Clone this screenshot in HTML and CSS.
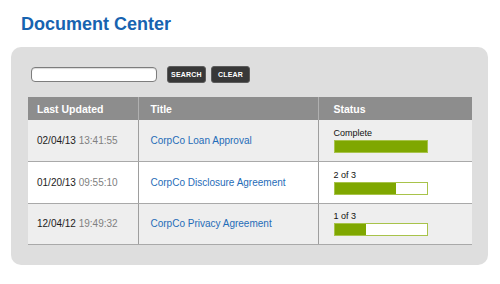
FILE: index.html
```html
<!DOCTYPE html>
<html lang="en">
<head>
  <meta charset="UTF-8" />
  <meta name="viewport" content="width=device-width, initial-scale=1.0"/>
  <title>Document Center</title>
  <link rel="stylesheet" href="styles.css">
</head>
<body>
  <div class="page">
    <h1>Document Center</h1>

    <div class="panel">
      <div class="toolbar">
        <input type="text" class="search-box">
        <button class="btn">Search</button>
        <button class="btn">Clear</button>
      </div>

      <table class="docs">
        <thead>
          <tr>
            <th class="col-date">Last Updated</th>
            <th class="col-title">Title</th>
            <th class="col-status">Status</th>
          </tr>
        </thead>
        <tbody>
          <tr class="odd">
            <td><span class="date">02/04/13</span> <span class="time">13:41:55</span></td>
            <td><a href="#">CorpCo Loan Approval</a></td>
            <td>
              <div class="status-label">Complete</div>
              <div class="bar"><div class="fill" style="width: 100%;"></div></div>
            </td>
          </tr>
          <tr>
            <td><span class="date">01/20/13</span> <span class="time">09:55:10</span></td>
            <td><a href="#">CorpCo Disclosure Agreement</a></td>
            <td>
              <div class="status-label">2 of 3</div>
              <div class="bar"><div class="fill" style="width: 67%;"></div></div>
            </td>
          </tr>
          <tr class="odd">
            <td><span class="date">12/04/12</span> <span class="time">19:49:32</span></td>
            <td><a href="#">CorpCo Privacy Agreement</a></td>
            <td>
              <div class="status-label">1 of 3</div>
              <div class="bar"><div class="fill" style="width: 34%;"></div></div>
            </td>
          </tr>
        </tbody>
      </table>
    </div>
  </div>
</body>
</html>
```

FILE: styles.css
```css
body {
  font-family: "Liberation Sans", Arial, sans-serif;
  background-color: white;
  margin: 0;
  padding: 0;
}
.page {
  padding: 0 12px 0 11px;
}
h1 {
  margin: 0 0 12px 0;
  padding: 14px 0 0 10px;
  font-size: 18px;
  line-height: 21px;
  color: #1763b0;
}
.panel {
  background-color: #dedede;
  border-radius: 10px;
  padding: 19px 16px 20px 17px;
}
.toolbar {
  display: flex;
  align-items: center;
  gap: 5px;
  padding-left: 3px;
  height: 17px;
}
.search-box {
  box-sizing: border-box;
  width: 126px;
  height: 15px;
  margin: 0 5px 0 0;
  padding: 0 4px;
  border: 1px solid #7d7d7d;
  border-radius: 4px;
  background-color: white;
  box-shadow: inset 0 1px 1px rgba(0, 0, 0, 0.15);
}
.btn {
  box-sizing: border-box;
  width: 39px;
  height: 17px;
  padding: 0;
  background-color: #383838;
  border: 1px solid #5c5c5c;
  border-radius: 3px;
  color: white;
  font-family: "Liberation Sans", Arial, sans-serif;
  font-size: 7px;
  font-weight: bold;
  text-transform: uppercase;
  letter-spacing: 0.2px;
}
.docs {
  width: 444px;
  margin-top: 14px;
  border-collapse: collapse;
  table-layout: fixed;
}
.docs th,
.docs td {
  box-sizing: border-box;
  padding: 0 0 0 9px;
  border-left: 1px solid #9e9e9e;
}
.docs th {
  height: 23px;
  background-color: #8d8d8d;
  color: white;
  font-size: 10.5px;
  text-align: left;
  border-left-color: #b0b0b0;
}
.docs th:first-child,
.docs td:first-child {
  border-left: none;
}
.docs th:nth-child(2),
.docs td:nth-child(2) {
  padding-left: 12px;
}
.docs th:last-child,
.docs td:last-child {
  padding-left: 15px;
}
.col-date { width: 110px; }
.col-title { width: 180px; }
.docs td {
  height: 41.5px;
  background-color: white;
  border-bottom: 1px solid #a9a9a9;
  font-size: 10px;
  vertical-align: middle;
}
.docs tr.odd td {
  background-color: #eeeeee;
}
.date {
  color: #1c1c1c;
}
.time {
  color: #808080;
}
.docs a {
  color: #1f6cb8;
  text-decoration: none;
}
.status-label {
  font-size: 9px;
  color: #111;
  margin-bottom: 2px;
}
.bar {
  box-sizing: border-box;
  width: 94px;
  height: 13px;
  border: 1px solid #a8c34a;
  background-color: white;
}
.fill {
  height: 100%;
  background-color: #7fa700;
}
```
